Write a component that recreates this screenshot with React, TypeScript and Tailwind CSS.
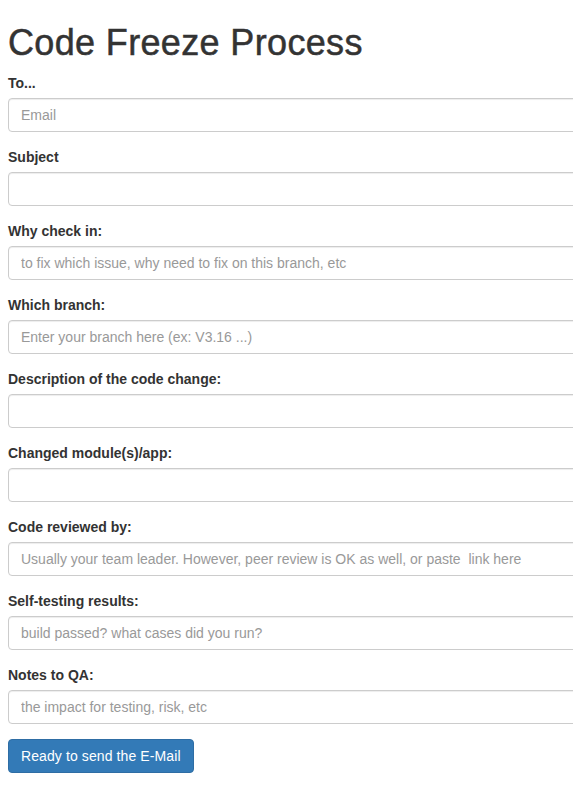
import React from 'react';

const fields = [
  { label: 'To...', placeholder: 'Email' },
  { label: 'Subject', placeholder: '' },
  { label: 'Why check in:', placeholder: 'to fix which issue, why need to fix on this branch, etc' },
  { label: 'Which branch:', placeholder: 'Enter your branch here (ex: V3.16 ...)' },
  { label: 'Description of the code change:', placeholder: '' },
  { label: 'Changed module(s)/app:', placeholder: '' },
  { label: 'Code reviewed by:', placeholder: 'Usually your team leader. However, peer review is OK as well, or paste  link here' },
  { label: 'Self-testing results:', placeholder: 'build passed? what cases did you run?' },
  { label: 'Notes to QA:', placeholder: 'the impact for testing, risk, etc' },
];

export default function App() {
  return (
    <div className="w-full min-h-[795px] overflow-hidden bg-white pl-2 text-[#333] font-['Helvetica_Neue','Liberation_Sans',Arial,sans-serif] text-sm">
      <h1 className="mt-[23px] mb-[10px] text-[36px] leading-[1.1] font-medium tracking-[0.35px] text-[#333] [-webkit-text-stroke:0.5px_#333]">
        Code Freeze Process
      </h1>
      <form>
        {fields.map((f) => (
          <div key={f.label} className="mb-[15px]">
            <label className="block mb-[5px] font-bold leading-5">{f.label}</label>
            <input
              type="text"
              placeholder={f.placeholder}
              className="block w-[700px] h-[34px] px-3 py-1.5 rounded border border-[#ccc] bg-white text-sm text-[#555] shadow-[inset_0_1px_1px_rgba(0,0,0,0.075)] placeholder:text-[#999] outline-none"
            />
          </div>
        ))}
        <button
          type="button"
          className="h-[34px] px-3 py-1.5 rounded border border-[#2e6da4] bg-[#337ab7] text-white text-sm leading-5 tracking-[0.1px]"
        >
          Ready to send the E-Mail
        </button>
      </form>
    </div>
  );
}
